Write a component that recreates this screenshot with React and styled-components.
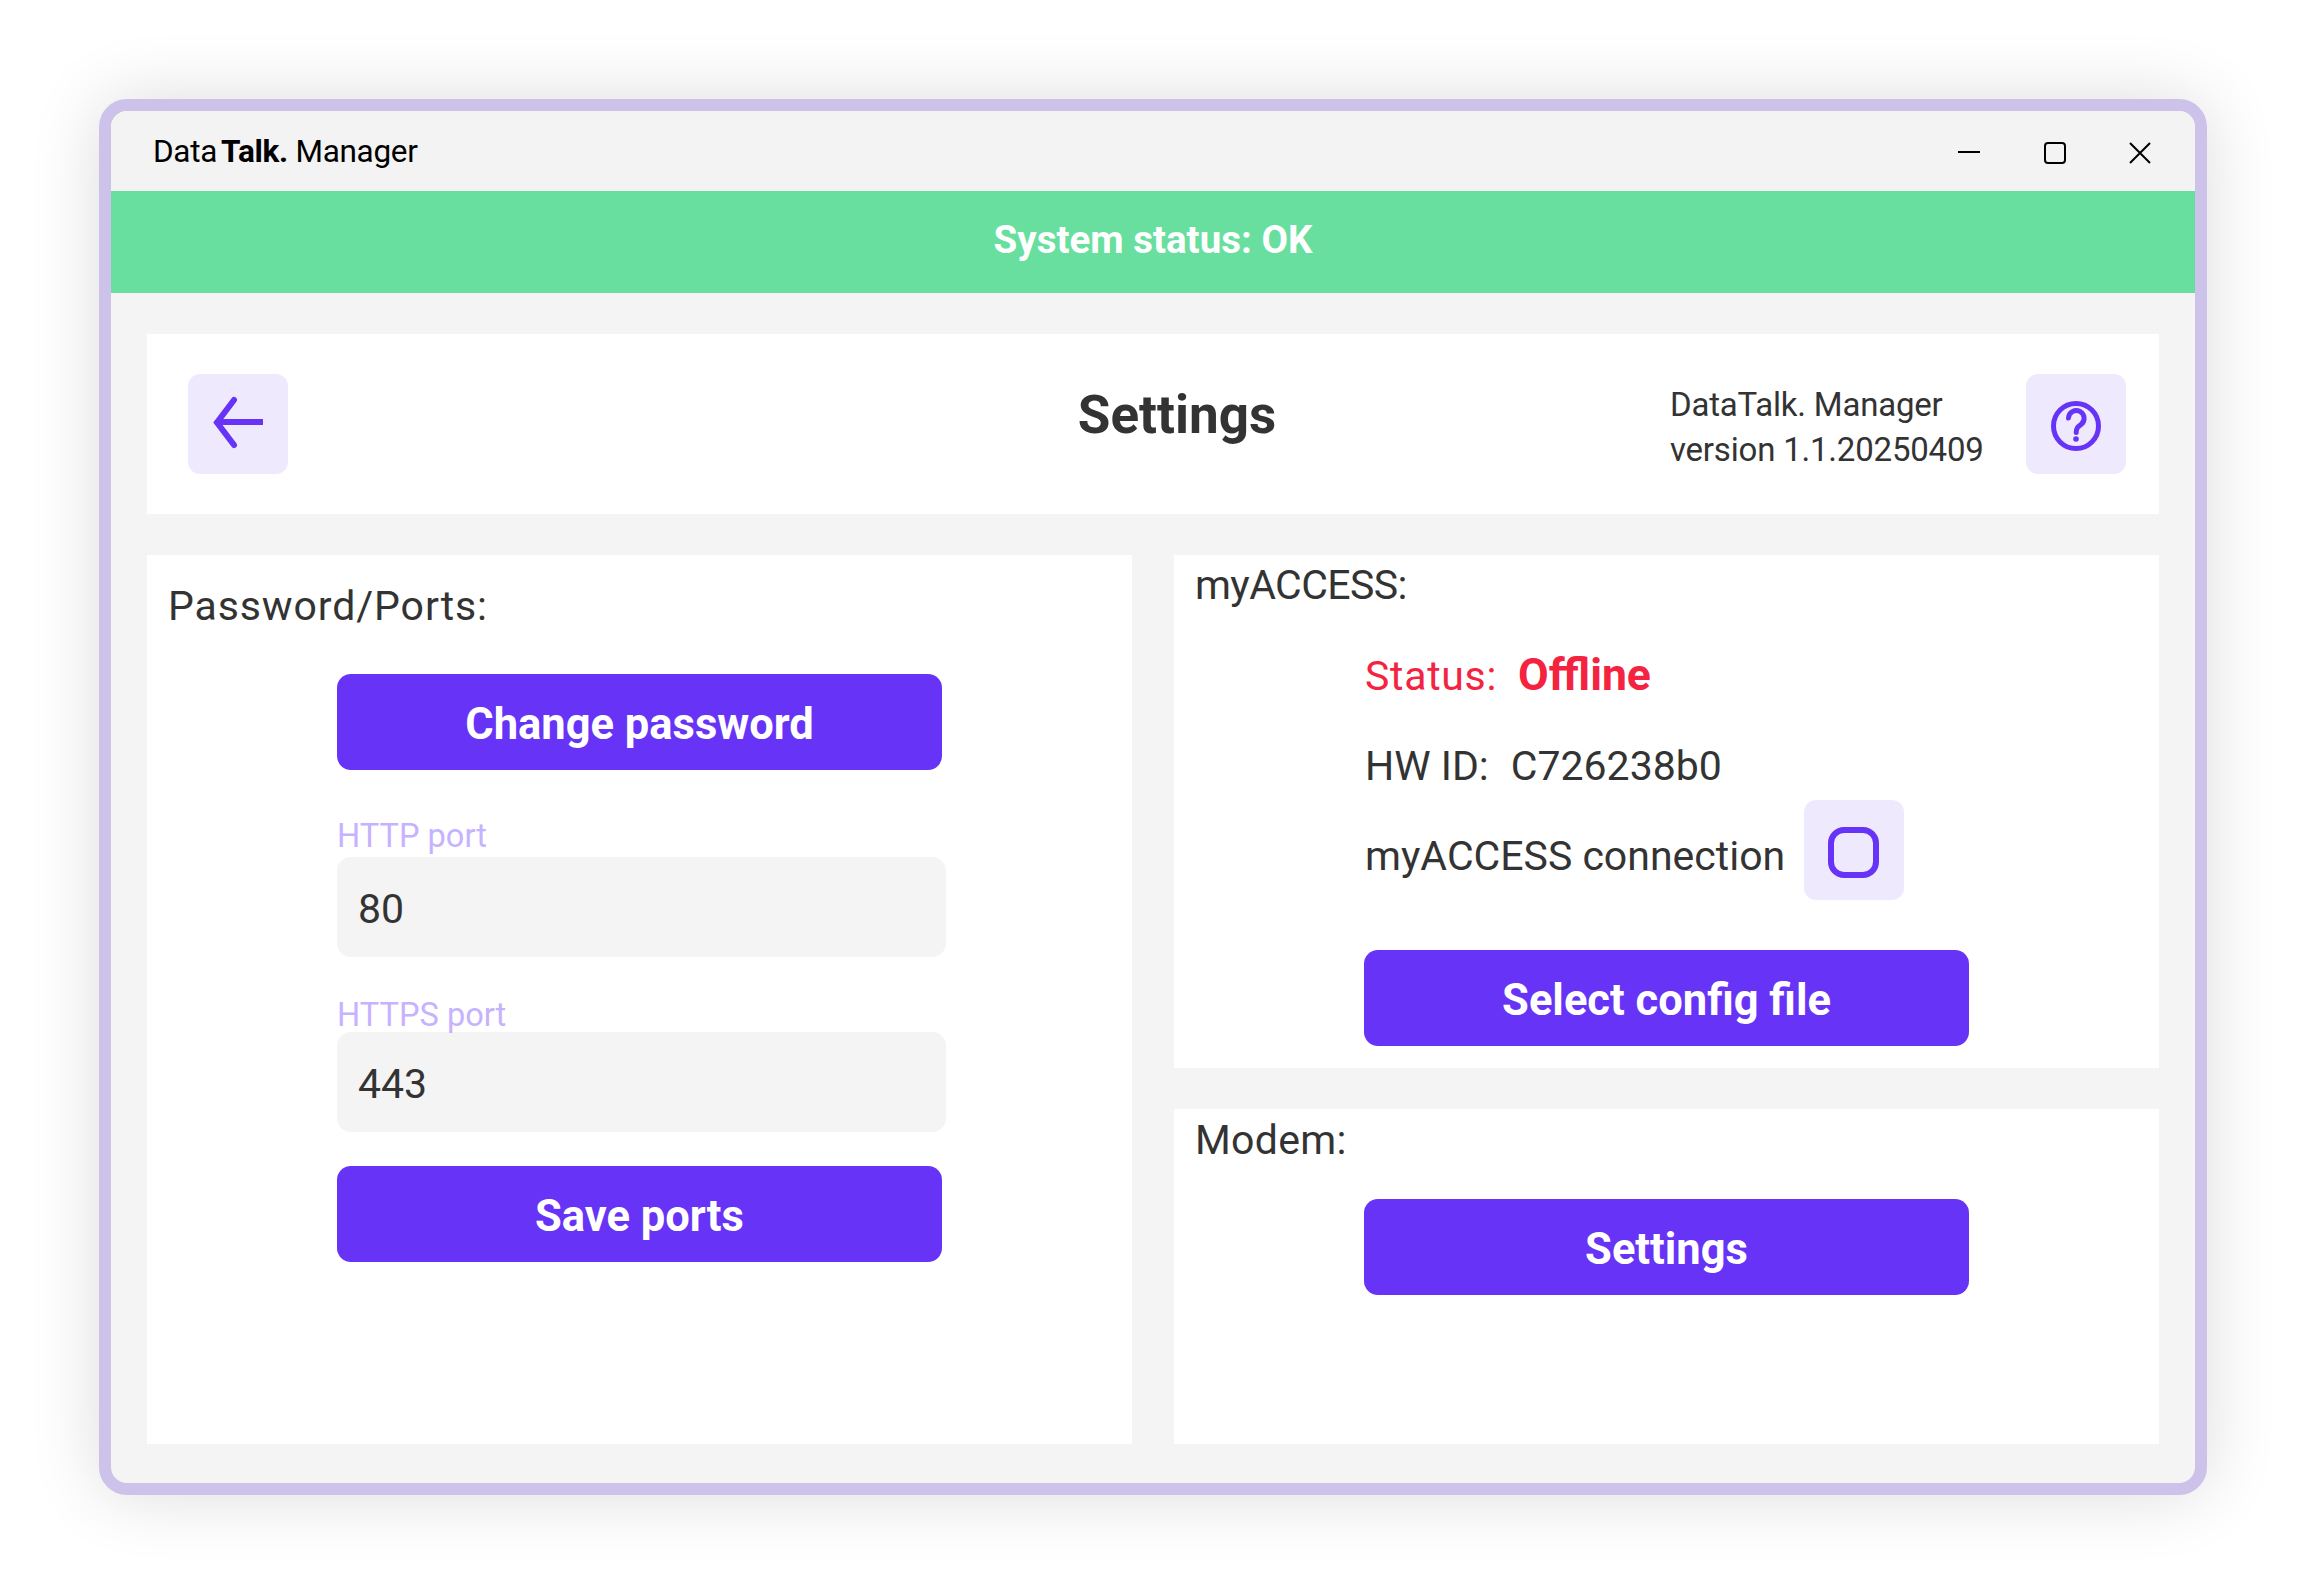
import React from 'react';
import styled, { createGlobalStyle } from 'styled-components';

const GlobalStyle = createGlobalStyle`
  html, body {
    margin: 0;
    padding: 0;
    background: #ffffff;
  }
  body {
    font-family: 'Roboto', 'Liberation Sans', sans-serif;
    color: #333333;
  }
`;

const Page = styled.div`
  width: 2307px;
  height: 1595px;
  box-sizing: border-box;
  padding: 99px 100px 100px 99px;
`;

const Window = styled.div`
  height: 100%;
  box-sizing: border-box;
  border: 12px solid #cdc2e9;
  border-radius: 28px;
  background: #f4f4f4;
  box-shadow: 0 0 70px rgba(0, 0, 0, 0.14);
  display: flex;
  flex-direction: column;
  overflow: hidden;
`;

const TitleBar = styled.div`
  height: 80px;
  flex: none;
  display: flex;
  align-items: center;
  justify-content: space-between;
  padding: 0 44px 0 42px;
  background: #f3f3f3;
  color: #000000;
  font-size: 31.5px;
  letter-spacing: -0.3px;
`;

const AppName = styled.div`
  b {
    font-weight: 700;
    margin-left: 4px;
  }
`;

const WindowControls = styled.div`
  display: flex;
  gap: 63.5px;
  padding-top: 4px;
  svg {
    display: block;
    width: 22px;
    height: 22px;
  }
`;

const StatusBar = styled.div`
  height: 102px;
  flex: none;
  box-sizing: border-box;
  padding-bottom: 5px;
  display: flex;
  align-items: center;
  justify-content: center;
  background: #68df9e;
  color: #ffffff;
  font-size: 38.5px;
  font-weight: 700;
`;

const Content = styled.div`
  flex: 1;
  min-height: 0;
  display: flex;
  flex-direction: column;
  gap: 41px;
  padding: 41px 36px 39px;
`;

const Header = styled.header`
  height: 180px;
  flex: none;
  box-sizing: border-box;
  display: flex;
  align-items: center;
  padding: 0 33px 0 41px;
  background: #ffffff;
`;

const IconButton = styled.button`
  width: 100px;
  height: 100px;
  flex: none;
  padding: 0;
  border: 0;
  border-radius: 12px;
  background: #efe9fe;
  svg {
    display: block;
    width: 100px;
    height: 100px;
  }
`;

const PageTitle = styled.h1`
  flex: 1;
  margin: 0 0 18px;
  padding-left: 396px;
  text-align: center;
  font-size: 53px;
  line-height: 60px;
  font-weight: 700;
  color: #333333;
`;

const VersionInfo = styled.div`
  margin: 6px 42px 0 0;
  width: 314px;
  font-size: 33px;
  line-height: 45px;
  white-space: nowrap;
  letter-spacing: -0.2px;
`;

const Columns = styled.div`
  flex: 1;
  min-height: 0;
  display: grid;
  grid-template-columns: 985px 985px;
  gap: 42px;
`;

const Column = styled.div`
  display: flex;
  flex-direction: column;
  gap: 41px;
`;

const Panel = styled.section`
  flex: ${(p) => (p.$grow ? 1 : 'none')};
  box-sizing: border-box;
  padding: ${(p) => p.$pad};
  background: #ffffff;
`;

const SectionTitle = styled.h2`
  margin: 0;
  padding-top: 1px;
  font-size: 41px;
  line-height: 50px;
  font-weight: 400;
  letter-spacing: ${(p) => p.$track}px;
  color: #333333;
  white-space: nowrap;
`;

const Body = styled.div`
  margin-left: ${(p) => p.$left}px;
  margin-top: ${(p) => p.$top}px;
  width: 609px;
`;

const PrimaryButton = styled.button`
  display: block;
  width: 605px;
  height: 96px;
  margin-top: ${(p) => p.$top || 0}px;
  padding: 5px 0 0;
  border: 0;
  border-radius: 14px;
  background: #6733f7;
  color: #ffffff;
  font-family: inherit;
  font-size: 43.5px;
  font-weight: 700;
`;

const FieldLabel = styled.label`
  display: block;
  margin-top: ${(p) => p.$top}px;
  margin-bottom: ${(p) => p.$bottom}px;
  font-size: 32.6px;
  line-height: 36px;
  color: #c6b2ff;
`;

const TextInput = styled.input`
  display: block;
  width: 100%;
  height: 100px;
  box-sizing: border-box;
  padding: 4px 21px 0;
  border: 0;
  border-radius: 14px;
  outline: none;
  background: #f4f4f4;
  color: #333333;
  font-family: inherit;
  font-size: 41px;
`;

const InfoLine = styled.div`
  height: 50px;
  margin-top: ${(p) => p.$top || 0}px;
  padding-left: 1px;
  font-size: 41px;
  line-height: 50px;
  letter-spacing: ${(p) => (p.$error ? '0.7px' : '0')};
  color: ${(p) => (p.$error ? '#f4233f' : '#333333')};
  white-space: nowrap;
  strong {
    font-size: 44.5px;
    font-weight: 700;
    letter-spacing: 0;
    margin-left: 21px;
  }
  span {
    margin-left: 22px;
  }
`;

const ToggleRow = styled.div`
  display: flex;
  align-items: center;
  gap: 19px;
  margin-top: 9px;
  padding-left: 1px;
  font-size: 41px;
  white-space: nowrap;
  > span {
    padding-top: 12px;
  }
`;

const App = () => {
  return (
    <>
      <GlobalStyle />
      <Page>
        <Window>
          <TitleBar>
            <AppName>
              Data<b>Talk.</b> Manager
            </AppName>
            <WindowControls>
              <svg viewBox="0 0 22 22" fill="none" stroke="#000" strokeWidth="2">
                <path d="M0 10h22" />
              </svg>
              <svg viewBox="0 0 22 22" fill="none" stroke="#000" strokeWidth="2">
                <rect x="1" y="1" width="20" height="20" rx="3" />
              </svg>
              <svg viewBox="0 0 22 22" fill="none" stroke="#000" strokeWidth="2">
                <path d="M1 1l20 20M21 1L1 21" />
              </svg>
            </WindowControls>
          </TitleBar>
          <StatusBar>System status: OK</StatusBar>
          <Content>
            <Header>
              <IconButton>
                <svg viewBox="0 0 100 100" fill="none" stroke="#6733f7" strokeWidth="6">
                  <path d="M75 48H29" />
                  <path d="M46 26L29 48.5L46 71" strokeLinecap="round" />
                </svg>
              </IconButton>
              <PageTitle>Settings</PageTitle>
              <VersionInfo>
                DataTalk. Manager
                <br />
                version 1.1.20250409
              </VersionInfo>
              <IconButton>
                <svg viewBox="0 0 100 100" fill="none" stroke="#6733f7" strokeWidth="5">
                  <circle cx="50" cy="52" r="22.5" />
                  <path d="M42.5 44a7.8 7.8 0 1 1 12.5 6.5c-3 2.2-4.8 3.6-4.8 8" strokeLinecap="round" />
                  <circle cx="50" cy="65" r="2.8" fill="#6733f7" stroke="none" />
                </svg>
              </IconButton>
            </Header>
            <Columns>
              <Panel $pad="25px 0 0 21px">
                <SectionTitle $track={0.9}>Password/Ports:</SectionTitle>
                <Body $left={169} $top={43}>
                  <PrimaryButton>Change password</PrimaryButton>
                  <FieldLabel $top={48} $bottom={3} htmlFor="http-port">HTTP port</FieldLabel>
                  <TextInput id="http-port" defaultValue="80" />
                  <FieldLabel $top={40} $bottom={-1} htmlFor="https-port">HTTPS port</FieldLabel>
                  <TextInput id="https-port" defaultValue="443" />
                  <PrimaryButton $top={34}>Save ports</PrimaryButton>
                </Body>
              </Panel>
              <Column>
                <Panel $pad="4px 0 22px 21px">
                  <SectionTitle $track={-0.6}>myACCESS:</SectionTitle>
                  <Body $left={169} $top={40}>
                    <InfoLine $error>
                      Status:<strong>Offline</strong>
                    </InfoLine>
                    <InfoLine $top={41}>
                      HW ID:<span>C726238b0</span>
                    </InfoLine>
                    <ToggleRow>
                      <span>myACCESS connection</span>
                      <IconButton>
                        <svg viewBox="0 0 100 100" fill="none" stroke="#6733f7" strokeWidth="6">
                          <rect x="27" y="30" width="45" height="45" rx="13" />
                        </svg>
                      </IconButton>
                    </ToggleRow>
                    <PrimaryButton $top={50}>Select config file</PrimaryButton>
                  </Body>
                </Panel>
                <Panel $grow $pad="5px 0 0 21px">
                  <SectionTitle $track={0.3}>Modem:</SectionTitle>
                  <Body $left={169} $top={34}>
                    <PrimaryButton>Settings</PrimaryButton>
                  </Body>
                </Panel>
              </Column>
            </Columns>
          </Content>
        </Window>
      </Page>
    </>
  );
};

export default App;
